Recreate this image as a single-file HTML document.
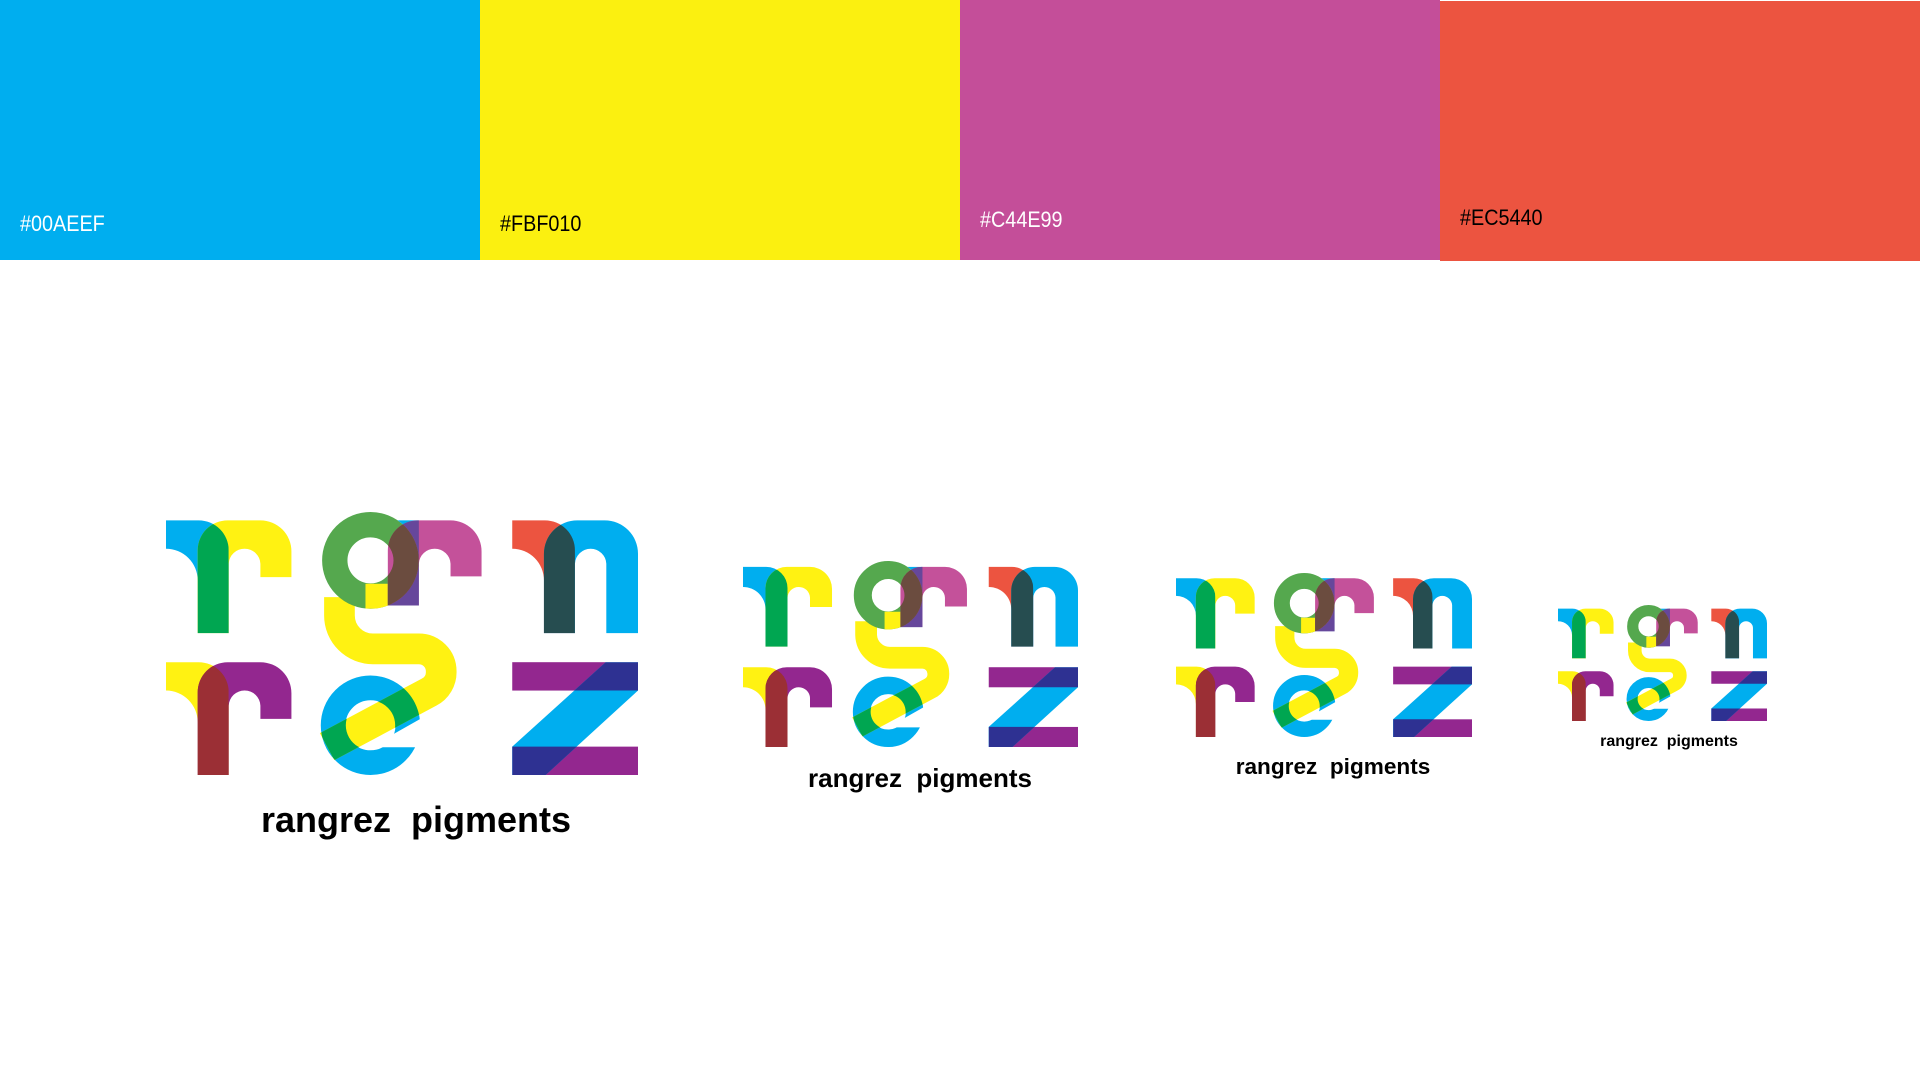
<!DOCTYPE html>
<html><head><meta charset="utf-8"><style>
html,body{margin:0;padding:0;background:#fff;width:1920px;height:1080px;overflow:hidden;font-family:"Liberation Sans",sans-serif}
.sw{position:absolute;top:0;height:260px;width:480px}
.sw span{position:absolute;left:20px;font-size:22px;transform:scaleX(0.9);transform-origin:left}
.lg{position:absolute}
.t{position:absolute;font-weight:bold;white-space:pre;line-height:1;color:#000;transform:translateX(-50%)}
</style></head><body>
<div class="sw" style="left:0;background:#00AEEF"><span style="top:211px;color:#fff">#00AEEF</span></div>
<div class="sw" style="left:480px;background:#FBF010"><span style="top:211px;color:#000">#FBF010</span></div>
<div class="sw" style="left:960px;background:#C44E99"><span style="top:207px;color:#fff">#C44E99</span></div>
<div class="sw" style="left:1440px;top:1px;background:#EC5440"><span style="top:204px;color:#000">#EC5440</span></div>

<svg class="lg" style="left:166px;top:512px" width="472" height="263" viewBox="47 35 1415 788" preserveAspectRatio="none">
<defs>
<path id="rA" d="M47,60 H145 A90,90 0 0 1 235,150 V398 H142 V240 A95,95 0 0 0 47,145 Z"/>
<path id="rB" d="M142,398 V150 A90,90 0 0 1 232,60 H330 A93,93 0 0 1 423,153 V230 H330 V190 A47,47 0 0 0 283,145 A47,47 0 0 0 235,190 V398 Z"/>
<path id="nB" d="M1180,398 V160 A100,100 0 0 1 1280,60 H1362 A100,100 0 0 1 1462,160 V398 H1367 V190 A47,47 0 0 0 1320,145 A47,47 0 0 0 1273,190 V398 Z"/>
<path id="gM" d="M712,315 V150 A90,90 0 0 1 802,60 H900 A93,93 0 0 1 993,153 V228 H900 V190 A47,47 0 0 0 853,145 A47,47 0 0 0 805,190 V315 Z"/>
<path id="yS" d="M567,290 V345 A100,100 0 0 0 667,445 H805 A67,67 0 0 1 872,512 A67,67 0 0 1 835,575 L530,738"/>
<polygon id="zB" points="1365,485 1462,485 1462,570 1185,823 1085,823 1085,738"/>
<clipPath id="cRA"><use href="#rA"/></clipPath>
<clipPath id="cRA2"><use href="#rA" transform="translate(0,425)"/></clipPath>
<clipPath id="cNA"><use href="#rA" transform="translate(1038,0)"/></clipPath>
<clipPath id="cZ"><rect x="1085" y="485" width="377" height="85"/><rect x="1085" y="738" width="377" height="85"/></clipPath>
<clipPath id="cE"><path d="M660,525 A149,149 0 1 1 659.9,525 Z M660,600 A74,74 0 1 0 660.1,600 Z" clip-rule="evenodd"/></clipPath>
<clipPath id="cRing"><path d="M660,35 A145,145 0 1 1 659.9,35 Z M660,111 A69,69 0 1 0 660.1,111 Z" clip-rule="evenodd"/></clipPath>
<clipPath id="cStem"><rect x="712" y="60" width="93" height="255"/></clipPath>
<mask id="mk"><rect x="0" y="0" width="1500" height="900" fill="#fff"/><circle cx="660" cy="180" r="145" fill="#000"/></mask>
</defs>
<g id="logo">
<rect x="0" y="0" width="1500" height="900" fill="#fff"/>
<!-- r top -->
<use href="#rA" fill="#00AEEF"/>
<use href="#rB" fill="#FFF212"/>
<use href="#rB" fill="#00A651" clip-path="url(#cRA)"/>
<!-- r bottom -->
<g transform="translate(0,425)">
<use href="#rA" fill="#FFF212"/>
<use href="#rB" fill="#93278F"/>
</g>
<g clip-path="url(#cRA2)"><use href="#rB" transform="translate(0,425)" fill="#9B2F35"/></g>
<!-- e -->
<circle cx="660" cy="674" r="112" fill="none" stroke="#00AEEF" stroke-width="74"/>
<polygon fill="#fff" points="680,728 850,632 850,740 680,740"/>
<!-- g -->
<use href="#yS" fill="none" stroke="#FFF212" stroke-width="92"/>
<g clip-path="url(#cE)"><use href="#yS" fill="none" stroke="#00A651" stroke-width="92"/></g>
<polygon fill="#fff" points="680,728 850,632 850,740 680,740" clip-path="url(#cE)" opacity="0"/>
<circle cx="660" cy="180" r="107" fill="none" stroke="#55A84E" stroke-width="76"/>
<rect x="645" y="250" width="67" height="80" fill="#FFF212" clip-path="url(#cRing)"/>
<rect x="712" y="60" width="93" height="255" fill="#00AEEF" mask="url(#mk)"/>
<use href="#gM" fill="#C4519A"/>
<g clip-path="url(#cStem)"><use href="#gM" fill="#66479B" mask="url(#mk)"/></g>
<g clip-path="url(#cRing)"><use href="#gM" fill="#6B4C3F"/></g>
<!-- n -->
<use href="#rA" transform="translate(1038,0)" fill="#EC5440"/>
<use href="#nB" fill="#00AEEF"/>
<g clip-path="url(#cNA)"><use href="#nB" fill="#264D50"/></g>
<!-- z -->
<rect x="1085" y="485" width="377" height="85" fill="#93278F"/>
<rect x="1085" y="738" width="377" height="85" fill="#93278F"/>
<use href="#zB" fill="#00AEEF"/>
<g clip-path="url(#cZ)"><use href="#zB" fill="#2E3192"/></g>
</g>
</svg>
<svg class="lg" style="left:743px;top:561px" width="335" height="186" viewBox="47 35 1415 788" preserveAspectRatio="none"><use href="#logo"/></svg>
<svg class="lg" style="left:1176px;top:573px" width="296" height="164" viewBox="47 35 1415 788" preserveAspectRatio="none"><use href="#logo"/></svg>
<svg class="lg" style="left:1558px;top:605px" width="209" height="116" viewBox="47 35 1415 788" preserveAspectRatio="none"><use href="#logo"/></svg>

<div class="t" style="left:416px;top:802px;font-size:36px">rangrez  pigments</div>
<div class="t" style="left:920px;top:765px;font-size:26px">rangrez  pigments</div>
<div class="t" style="left:1333px;top:756px;font-size:22.6px">rangrez  pigments</div>
<div class="t" style="left:1669px;top:734px;font-size:16px">rangrez  pigments</div>
</body></html>
